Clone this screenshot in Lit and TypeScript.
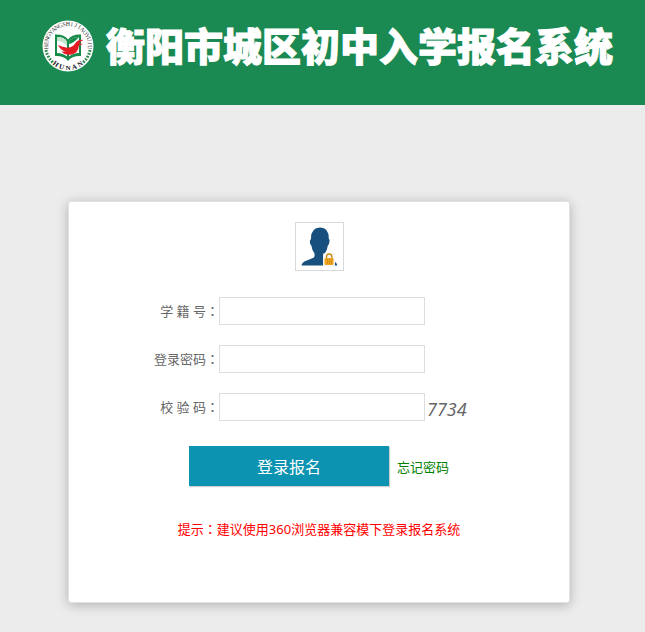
import { LitElement, html, css, svg } from "lit";
import { customElement } from "lit/decorators.js";

const arc = (text: string, start: number, end: number, y: number) => {
  const chars = [...text];
  return chars.map((c, i) => {
    const angle = start + ((end - start) * i) / (chars.length - 1);
    return svg`<text x="26" y=${y} text-anchor="middle" transform="rotate(${angle} 26 26)">${c}</text>`;
  });
};

@customElement("school-logo")
class SchoolLogo extends LitElement {
  static styles = css`
    :host { display: block; width: 52px; height: 52px; flex: none; }
    svg { display: block; }
    .outer { font: 6px "Liberation Serif", serif; fill: #333; }
    .base { font: bold 7px "Liberation Serif", serif; fill: #111; }
  `;
  render() {
    return html`<svg width="52" height="52" viewBox="0 0 52 52" role="img" aria-label="衡阳市教育局">
      <circle cx="26" cy="26" r="25.5" fill="#fff" />
      <g class="outer">${arc("HENGYANGSHIJIAOYUJU", -93, 93, 6)}</g>
      <g class="base">${arc("HUNAN", 34, -34, 50)}</g>
      <path d="M4 30a22.500 22.500 0 0 0 7.500 13M48 30a22.500 22.500 0 0 1-7.500 13" fill="none" stroke="#2d8a4e" stroke-width="3" stroke-dasharray="1.800 1.300" />
      <path d="M13 14.500q9-.5 13 5 4-5.500 13-5v21.500q-9-.5-13 5-4-5.500-13-5z" fill="#168a48" />
      <path d="M15 17q8 0 10 5v14.500q-4-3.500-10-3.500z" fill="#fff" />
      <path d="M15 17q8 0 10 5v4q-4-5-10-5z" fill="#c3e3cd" />
      <path d="M37 17q-8 0-10 5v14.500q4-3.500 10-3.500z" fill="#fff" />
      <path d="M37 17q-8 0-10 5v2q5-1 10-7z" fill="#168a48" />
      <path d="M16 25q4 1.500 8 2.500 6 1 9.500-4.500 3-4 8-3-3.500 1-4.500 3.500l4 .5-4 1.500q-1 8-7.500 9-6.500 1-10-3l4 .2q-5.500-2-7.500-6.700z" fill="#e31b23" />
    </svg>`;
  }
}

@customElement("user-avatar")
class UserAvatar extends LitElement {
  static styles = css`
    :host { display: block; box-sizing: border-box; width: 49px; height: 49px; border: 1px solid #d9d9d9; background: #fff; }
    svg { display: block; }
  `;
  render() {
    return html`<svg width="47" height="47" viewBox="0 0 47 47" aria-hidden="true">
      <path d="M5.500 42.500q.5-3 4-4.500l8-3.200q1.500-.8 1-4.300-2.500-3-3-7.500-2-1.500-1.500-5.500.2-1 1-1.200Q14.500 5 24 4.500q9-.2 8.800 11.500 1 .5.700 2.500-.3 3-1.700 4.200-.6 4.800-3 7.500-.3 4 1.200 4.800l8 3.200q3 1.500 3.300 4.300z" fill="#17507f" />
      <rect x="27" y="30" width="12" height="14" rx="2" fill="#f7f7f7" />
      <path d="M30.500 36v-2q0-3 2.700-3t2.700 3v2" fill="none" stroke="#c98710" stroke-width="1.300" />
      <rect x="28.500" y="35" width="9" height="7" rx="1" fill="#eda41f" />
      <path d="M31.500 36v5M33.500 36v5M35.500 36v5" stroke="#c47e0c" stroke-width=".6" />
    </svg>`;
  }
}

@customElement("app-root")
class AppRoot extends LitElement {
  static styles = css`
    :host {
      display: flex;
      flex-direction: column;
      min-height: 100vh;
      background: #ececec;
      color: #666;
      font: 13px/20px "Noto Sans", "Noto Sans CJK SC", sans-serif;
    }
    header {
      display: flex;
      gap: 12px;
      box-sizing: border-box;
      min-height: 105px;
      padding: 20px 24px 32px 42px;
      background: #1b8a52;
    }
    h1 {
      margin: 0;
      color: #fff;
      font: 900 39px/48px "Noto Sans CJK SC", sans-serif;
      -webkit-text-stroke: 1px #fff;
      white-space: nowrap;
    }
    main { padding: 96px 75px 29px 68px; }
    .card {
      box-sizing: border-box;
      max-width: 502px;
      margin: 0 auto;
      padding: 20px 0 63px;
      border: 1px solid #e2e2e2;
      border-radius: 3px;
      background: #fff;
      box-shadow: 0 2px 12px rgba(0, 0, 0, 0.25);
    }
    user-avatar { margin: 0 auto 26px; }
    .row {
      display: grid;
      grid-template-columns: 150px 206px auto;
      align-items: center;
      margin-bottom: 20px;
    }
    .row label { text-align: right; }
    .colon { font-family: "Noto Sans CJK TC", sans-serif; }
    input {
      box-sizing: border-box;
      width: 100%;
      height: 28px;
      padding: 0 6px;
      border: 1px solid #ddd;
      border-radius: 0;
      background: #fff;
      color: #666;
      font: inherit;
      outline: none;
    }
    .code { padding: 4px 0 0 2px; font-size: 18px; font-style: italic; }
    .actions {
      display: flex;
      align-items: center;
      gap: 8px;
      margin-top: 25px;
      padding-left: 120px;
    }
    button {
      width: 200px;
      height: 40px;
      padding: 0;
      border: 0;
      background: #0b93b1;
      box-shadow: 1px 1px 1px #ccc;
      color: #fff;
      font: 16px/40px "Noto Sans CJK SC", sans-serif;
      cursor: pointer;
    }
    a { padding-top: 2px; color: #008000; text-decoration: none; }
    .tip { margin: 33px 0 0; color: #f00; text-align: center; }
  `;

  render() {
    const colon = html`<span class="colon" lang="zh-TW">：</span>`;
    return html`
      <header>
        <school-logo></school-logo>
        <h1>衡阳市城区初中入学报名系统</h1>
      </header>
      <main>
        <form class="card" lang="zh-CN" @submit=${(e: Event) => e.preventDefault()}>
          <user-avatar></user-avatar>
          <div class="row">
            <label for="student">学 籍 号${colon}</label>
            <input id="student" type="text" />
          </div>
          <div class="row">
            <label for="password">登录密码${colon}</label>
            <input id="password" type="password" />
          </div>
          <div class="row">
            <label for="captcha">校 验 码${colon}</label>
            <input id="captcha" type="text" />
            <span class="code">7734</span>
          </div>
          <div class="actions">
            <button type="submit">登录报名</button>
            <a href="#">忘记密码</a>
          </div>
          <p class="tip">提示${colon}建议使用360浏览器兼容模下登录报名系统</p>
        </form>
      </main>
    `;
  }
}
